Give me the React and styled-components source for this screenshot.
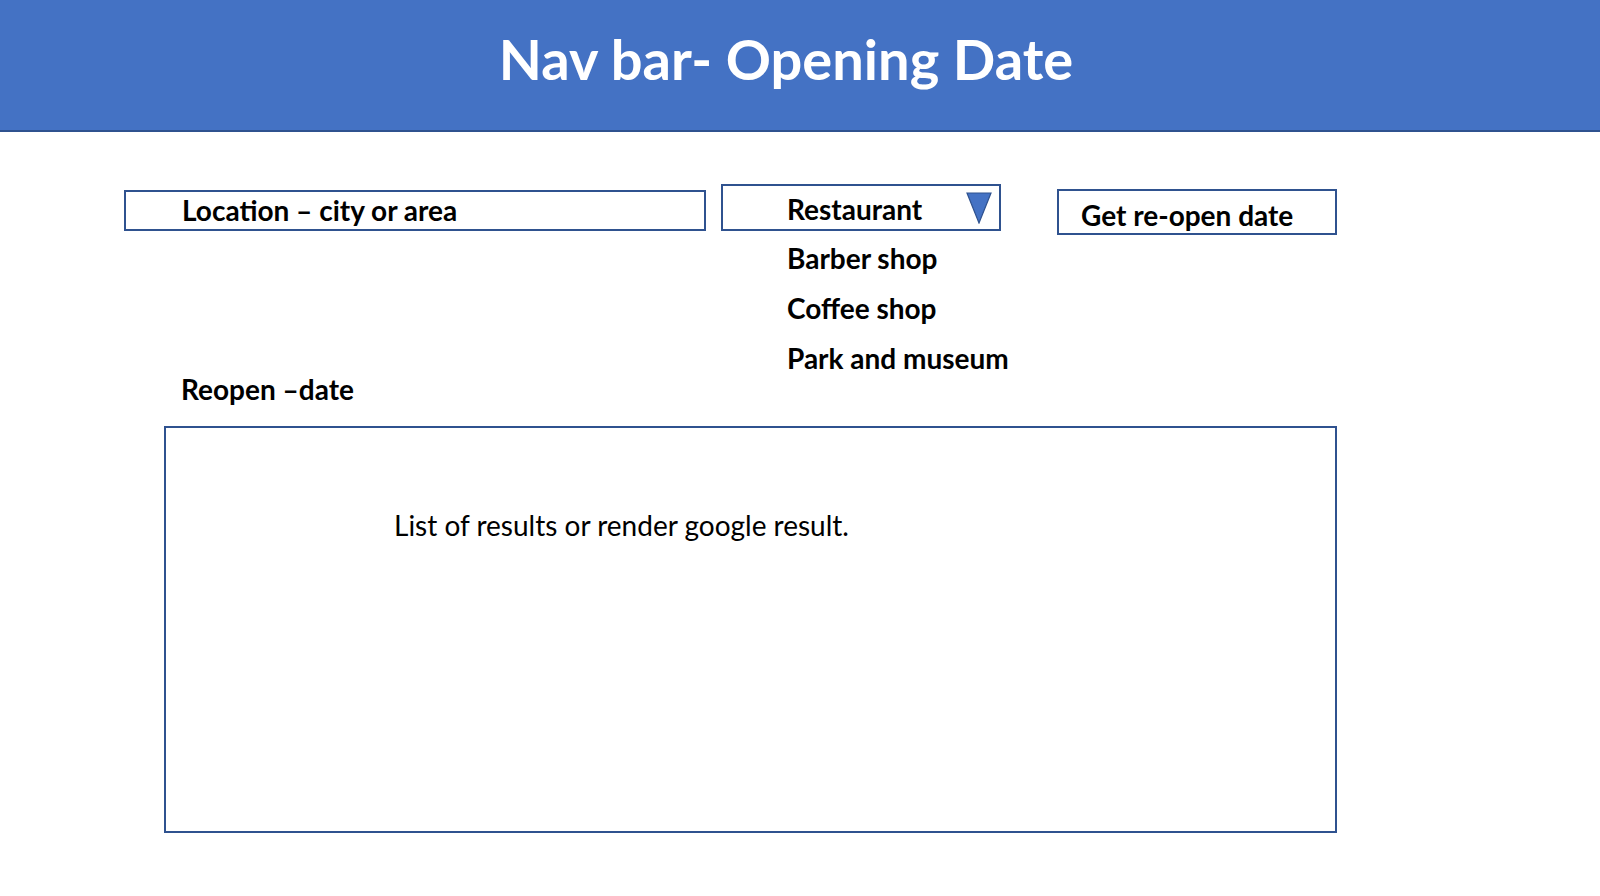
import React from 'react'
import styled, { createGlobalStyle } from 'styled-components'

const colors = {
  primary: '#4472C4',
  line: '#2F528F',
  text: '#000000',
}

const GlobalStyle = createGlobalStyle`
  html, body {
    margin: 0;
    padding: 0;
    background: #ffffff;
  }
  body {
    font-family: Lato, "Open Sans", "Liberation Sans", sans-serif;
    color: ${colors.text};
  }
  * {
    box-sizing: border-box;
  }
`

const Header = styled.header`
  height: 132px;
  background: ${colors.primary};
  border-bottom: 2px solid ${colors.line};
  display: flex;
  align-items: center;
  justify-content: center;
  padding: 0 28px 14px 0;
`

const Title = styled.h1`
  margin: 0;
  color: #ffffff;
  font-size: 56px;
  font-weight: 700;
`

const Main = styled.main`
  padding: 52px 0 0 124px;
`

const Controls = styled.div`
  display: flex;
  align-items: flex-start;
`

const LocationField = styled.div`
  width: 582px;
  height: 41px;
  margin-top: 6px;
  border: 2px solid ${colors.line};
  padding-left: 56px;
  font-size: 28px;
  font-weight: 700;
  line-height: 37px;
  white-space: nowrap;
`

const Dropdown = styled.div`
  position: relative;
  width: 280px;
  height: 47px;
  margin-left: 15px;
  border: 2px solid ${colors.line};
  padding: 0 7px 0 64px;
  display: flex;
  align-items: center;
  justify-content: space-between;
  font-size: 28px;
  font-weight: 700;
`

const Selected = styled.span`
  line-height: 43px;
  padding-top: 4px;
`

const Options = styled.ul`
  position: absolute;
  top: calc(100% + 4px);
  left: 64px;
  margin: 0;
  padding: 0;
  list-style: none;
  white-space: nowrap;
`

const Option = styled.li`
  line-height: 50px;
`

const Button = styled.div`
  width: 280px;
  height: 46px;
  margin: 5px 0 0 56px;
  border: 2px solid ${colors.line};
  padding: 7px 0 0 22px;
  font-size: 28px;
  font-weight: 700;
  line-height: 35px;
  white-space: nowrap;
`

const Label = styled.div`
  margin: 139px 0 0 57px;
  font-size: 28px;
  font-weight: 700;
  line-height: 31px;
`

const Results = styled.section`
  width: 1173px;
  height: 407px;
  margin: 21px 0 0 40px;
  border: 2px solid ${colors.line};
  padding: 82px 0 0 228px;
  font-size: 28px;
  font-weight: 400;
  line-height: 31px;
`

function Caret() {
  return (
    <svg width="26" height="32" viewBox="0 0 26 32">
      <polygon points="1,1 25,1 13,31" fill={colors.primary} stroke={colors.line} strokeWidth="1.2" />
    </svg>
  )
}

const places = ['Barber shop', 'Coffee shop', 'Park and museum']

export default function App() {
  return (
    <>
      <GlobalStyle />
      <Header>
        <Title>Nav bar- Opening Date</Title>
      </Header>
      <Main>
        <Controls>
          <LocationField>Location – city or area</LocationField>
          <Dropdown>
            <Selected>Restaurant</Selected>
            <Caret />
            <Options>
              {places.map((p) => (
                <Option key={p}>{p}</Option>
              ))}
            </Options>
          </Dropdown>
          <Button>Get re-open date</Button>
        </Controls>
        <Label>Reopen –date</Label>
        <Results>List of results or render google result.</Results>
      </Main>
    </>
  )
}
